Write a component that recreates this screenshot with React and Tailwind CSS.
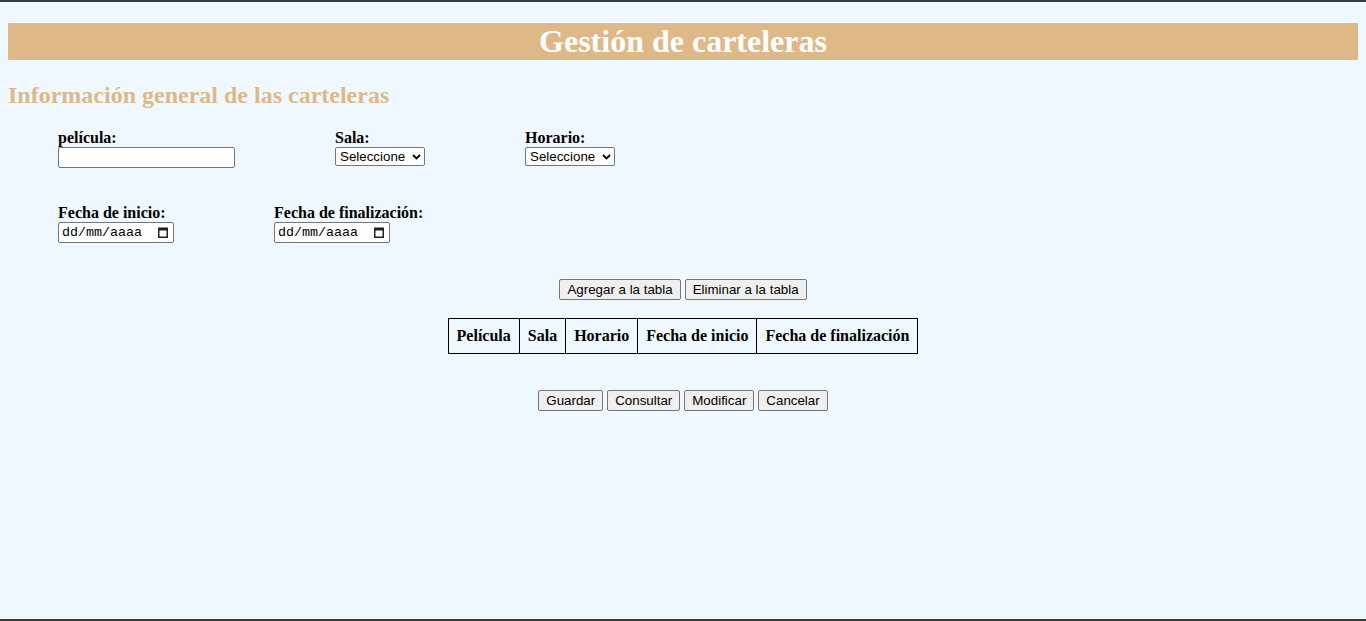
import React from 'react';

function Field({ label, children, className = '' }) {
  return (
    <div className={className}>
      <label className="block font-bold text-[16px] leading-[18px] text-black">{label}</label>
      {children}
    </div>
  );
}

function SelectBox() {
  return (
    <div className="flex items-center justify-between w-[90px] h-[19px] bg-white border border-[#767676] rounded-[2px] pl-[4px] pr-[3px] font-['Liberation_Sans'] text-[13.33px] leading-[17px] text-black">
      <span>Seleccione</span>
      <svg width="9" height="6" viewBox="0 0 9 6" className="shrink-0">
        <path d="M1 1l3.5 3.5L8 1" fill="none" stroke="#000" strokeWidth="1.8" />
      </svg>
    </div>
  );
}

function DateBox() {
  return (
    <div className="flex items-center justify-between w-[116px] h-[21px] bg-white border border-[#767676] rounded-[2px] pl-[3px] pr-[5px] font-['Liberation_Mono'] text-[13.33px] leading-[19px] text-black">
      <span>dd/mm/aaaa</span>
      <svg width="10" height="11" viewBox="0 0 10 11" className="shrink-0">
        <rect x="0.75" y="1.25" width="8.5" height="9" fill="none" stroke="#222" strokeWidth="1.5" />
        <rect x="0.5" y="1" width="9" height="2.5" fill="#222" />
      </svg>
    </div>
  );
}

function Btn({ children }) {
  return (
    <button className="h-[21px] px-[7px] bg-[#efefef] border border-[#767676] rounded-[2px] font-['Liberation_Sans'] text-[13.33px] leading-[19px] text-black">
      {children}
    </button>
  );
}

export default function App() {
  const columns = ['Película', 'Sala', 'Horario', 'Fecha de inicio', 'Fecha de finalización'];

  return (
    <div className="h-[621px] bg-[#f0f8ff] border-y-2 border-[#3a3a3a] font-['Liberation_Serif'] overflow-hidden">
      <div className="px-2 pt-[21px]">
        <h1 className="h-[37px] bg-[#deb887] text-white text-center font-bold text-[32px] leading-[37px]">
          Gestión de carteleras
        </h1>
        <h2 className="mt-[21px] text-[#deb887] font-bold text-[24px] leading-[28px]">
          Información general de las carteleras
        </h2>

        <form className="mt-[20px] pl-[50px]" onSubmit={e => e.preventDefault()}>
          <div className="flex">
            <Field label="película:" className="w-[277px]">
              <input
                type="text"
                className="block w-[177px] h-[21px] bg-white border border-[#767676] rounded-[2px] px-[2px] font-['Liberation_Sans'] text-[13.33px]"
              />
            </Field>
            <Field label="Sala:" className="w-[190px]">
              <SelectBox />
            </Field>
            <Field label="Horario:">
              <SelectBox />
            </Field>
          </div>

          <div className="flex mt-[36px]">
            <Field label="Fecha de inicio:" className="w-[216px]">
              <DateBox />
            </Field>
            <Field label="Fecha de finalización:">
              <DateBox />
            </Field>
          </div>
        </form>

        <div className="mt-[36px] flex justify-center gap-[4px]">
          <Btn>Agregar a la tabla</Btn>
          <Btn>Eliminar a la tabla</Btn>
        </div>

        <div className="mt-[18px] flex justify-center">
          <table className="border-collapse border border-black">
            <thead>
              <tr>
                {columns.map(c => (
                  <th key={c} className="border border-black px-[8px] h-[35px] font-bold text-[16px] leading-[18px] text-black">
                    {c}
                  </th>
                ))}
              </tr>
            </thead>
          </table>
        </div>

        <div className="mt-[36px] flex justify-center gap-[4px]">
          <Btn>Guardar</Btn>
          <Btn>Consultar</Btn>
          <Btn>Modificar</Btn>
          <Btn>Cancelar</Btn>
        </div>
      </div>
    </div>
  );
}
